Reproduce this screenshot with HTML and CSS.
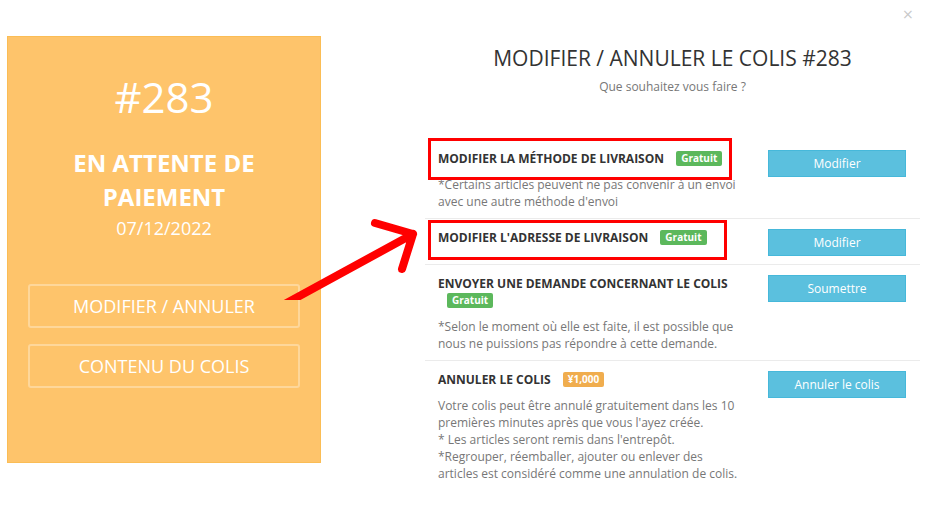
FILE: index.html
```html
<!DOCTYPE html>
<html lang="fr">
<head>
<meta charset="utf-8">
<title>Modifier / Annuler le colis #283</title>
<link rel="stylesheet" href="styles.css">
</head>
<body>
<div class="page">
  <aside class="status-card">
    <div class="num">#283</div>
    <div class="state">EN ATTENTE DE PAIEMENT</div>
    <div class="date">07/12/2022</div>
    <div class="card-actions">
      <button class="ghost">MODIFIER / ANNULER</button>
      <button class="ghost">CONTENU DU COLIS</button>
    </div>
  </aside>

  <main class="modal">
    <button class="close" aria-label="Fermer">×</button>
    <h1 class="title">MODIFIER / ANNULER LE COLIS #283</h1>
    <p class="sub">Que souhaitez vous faire ?</p>

    <div class="options">
      <div class="option">
        <div class="info">
          <div class="head"><span class="name">MODIFIER LA MÉTHODE DE LIVRAISON</span> <span class="badge free">Gratuit</span></div>
          <p class="desc">*Certains articles peuvent ne pas convenir à un envoi avec une autre méthode d'envoi</p>
        </div>
        <button class="btn">Modifier</button>
      </div>
      <div class="option">
        <div class="info">
          <div class="head"><span class="name">MODIFIER L'ADRESSE DE LIVRAISON</span> <span class="badge free">Gratuit</span></div>
          <p class="desc"></p>
        </div>
        <button class="btn">Modifier</button>
      </div>
      <div class="option">
        <div class="info">
          <div class="head"><span class="name">ENVOYER UNE DEMANDE CONCERNANT LE COLIS</span> <span class="badge free">Gratuit</span></div>
          <p class="desc">*Selon le moment où elle est faite, il est possible que nous ne puissions pas répondre à cette demande.</p>
        </div>
        <button class="btn">Soumettre</button>
      </div>
      <div class="option">
        <div class="info">
          <div class="head"><span class="name">ANNULER LE COLIS</span> <span class="badge fee">¥1,000</span></div>
          <p class="desc">Votre colis peut être annulé gratuitement dans les 10 premières minutes après que vous l'ayez créée.<br>* Les articles seront remis dans l'entrepôt.<br>*Regrouper, réemballer, ajouter ou enlever des articles est considéré comme une annulation de colis.</p>
        </div>
        <button class="btn">Annuler le colis</button>
      </div>
    </div>
  </main>

  <div class="mark mark-1"></div>
  <div class="mark mark-2"></div>
  <svg class="arrow" width="160" height="100" viewBox="270 200 160 100" aria-hidden="true">
    <path d="M283 305 L413 234 M375 223 L413 234 L402 269" fill="none" stroke="#ff0000" stroke-width="8" stroke-linecap="round" stroke-linejoin="round"/>
  </svg>
</div>
</body>
</html>
```

FILE: styles.css
```css
* { box-sizing: border-box; }

html, body {
  margin: 0;
  padding: 0;
  background: #ffffff;
}

body {
  font-family: "Open Sans", "Noto Sans", "Liberation Sans", sans-serif;
  color: #333333;
  width: 945px;
  height: 506px;
  overflow: hidden;
}

.page {
  position: relative;
  display: flex;
  align-items: flex-start;
  width: 945px;
  height: 506px;
}

/* left status card */
.status-card {
  margin: 36px 0 0 7px;
  width: 314px;
  height: 427px;
  background: #fec46b;
  border: 1px solid #fbbd55;
  display: flex;
  flex-direction: column;
  align-items: center;
  color: #ffffff;
  text-align: center;
}

.num {
  margin-top: 34px;
  font-size: 42px;
  line-height: 52px;
  font-weight: 400;
}

.state {
  margin-top: 23px;
  width: 220px;
  font-size: 24px;
  line-height: 34px;
  font-weight: 700;
}

.date {
  margin-top: 0;
  font-size: 18px;
  line-height: 28px;
}

.card-actions {
  margin-top: 42px;
  display: flex;
  flex-direction: column;
  gap: 16px;
  width: 272px;
}

.ghost {
  height: 44px;
  background: transparent;
  border: 2px solid rgba(255, 255, 255, 0.32);
  border-radius: 3px;
  color: #ffffff;
  font-family: inherit;
  font-size: 18px;
  padding: 0;
}

/* modal */
.modal {
  position: relative;
  margin-left: 104px;
  width: 495px;
  padding-top: 44px;
}

.close {
  position: absolute;
  top: 5px;
  left: 477px;
  border: 0;
  background: none;
  padding: 0;
  font-family: "DejaVu Sans", sans-serif;
  font-size: 14px;
  line-height: 18px;
  color: #c8c8c8;
}

.title {
  margin: 0;
  text-align: center;
  font-size: 21px;
  font-weight: 400;
  line-height: 28px;
  color: #333333;
}

.sub {
  margin: 5px 0 0;
  text-align: center;
  font-size: 12px;
  line-height: 20px;
  color: #777777;
}

.options {
  margin-top: 43px;
}

.option {
  display: grid;
  grid-template-columns: 1fr 138px;
  column-gap: 28px;
  align-items: start;
  padding: 10px 14px 8px 13px;
  border-top: 1px solid #ebebeb;
}

.option:first-child {
  border-top: 0;
}

.head {
  font-size: 12px;
  line-height: 17px;
}

.name {
  font-size: 12px;
  font-weight: 700;
  color: #333333;
}

.badge {
  display: inline-block;
  margin-left: 9px;
  padding: 0 5px;
  border-radius: 2px;
  font-size: 10px;
  font-weight: 700;
  line-height: 15px;
  color: #ffffff;
  vertical-align: 1px;
}

.badge.free { background: #5cb85c; }
.badge.fee { background: #f0ad4e; }

.desc {
  margin: 9px 0 0;
  font-size: 12px;
  line-height: 17px;
  color: #777777;
}

.btn {
  height: 27px;
  background: #5bc0de;
  border: 1px solid #46b8da;
  border-radius: 0;
  color: #ffffff;
  font-family: inherit;
  font-size: 12px;
  padding: 0;
}

/* annotations */
.mark {
  position: absolute;
  border: 3px solid #ff0000;
}

.mark-1 {
  left: 428px;
  top: 138px;
  width: 304px;
  height: 42px;
}

.mark-2 {
  left: 428px;
  top: 220px;
  width: 299px;
  height: 40px;
}

.arrow {
  position: absolute;
  left: 270px;
  top: 200px;
}
```
